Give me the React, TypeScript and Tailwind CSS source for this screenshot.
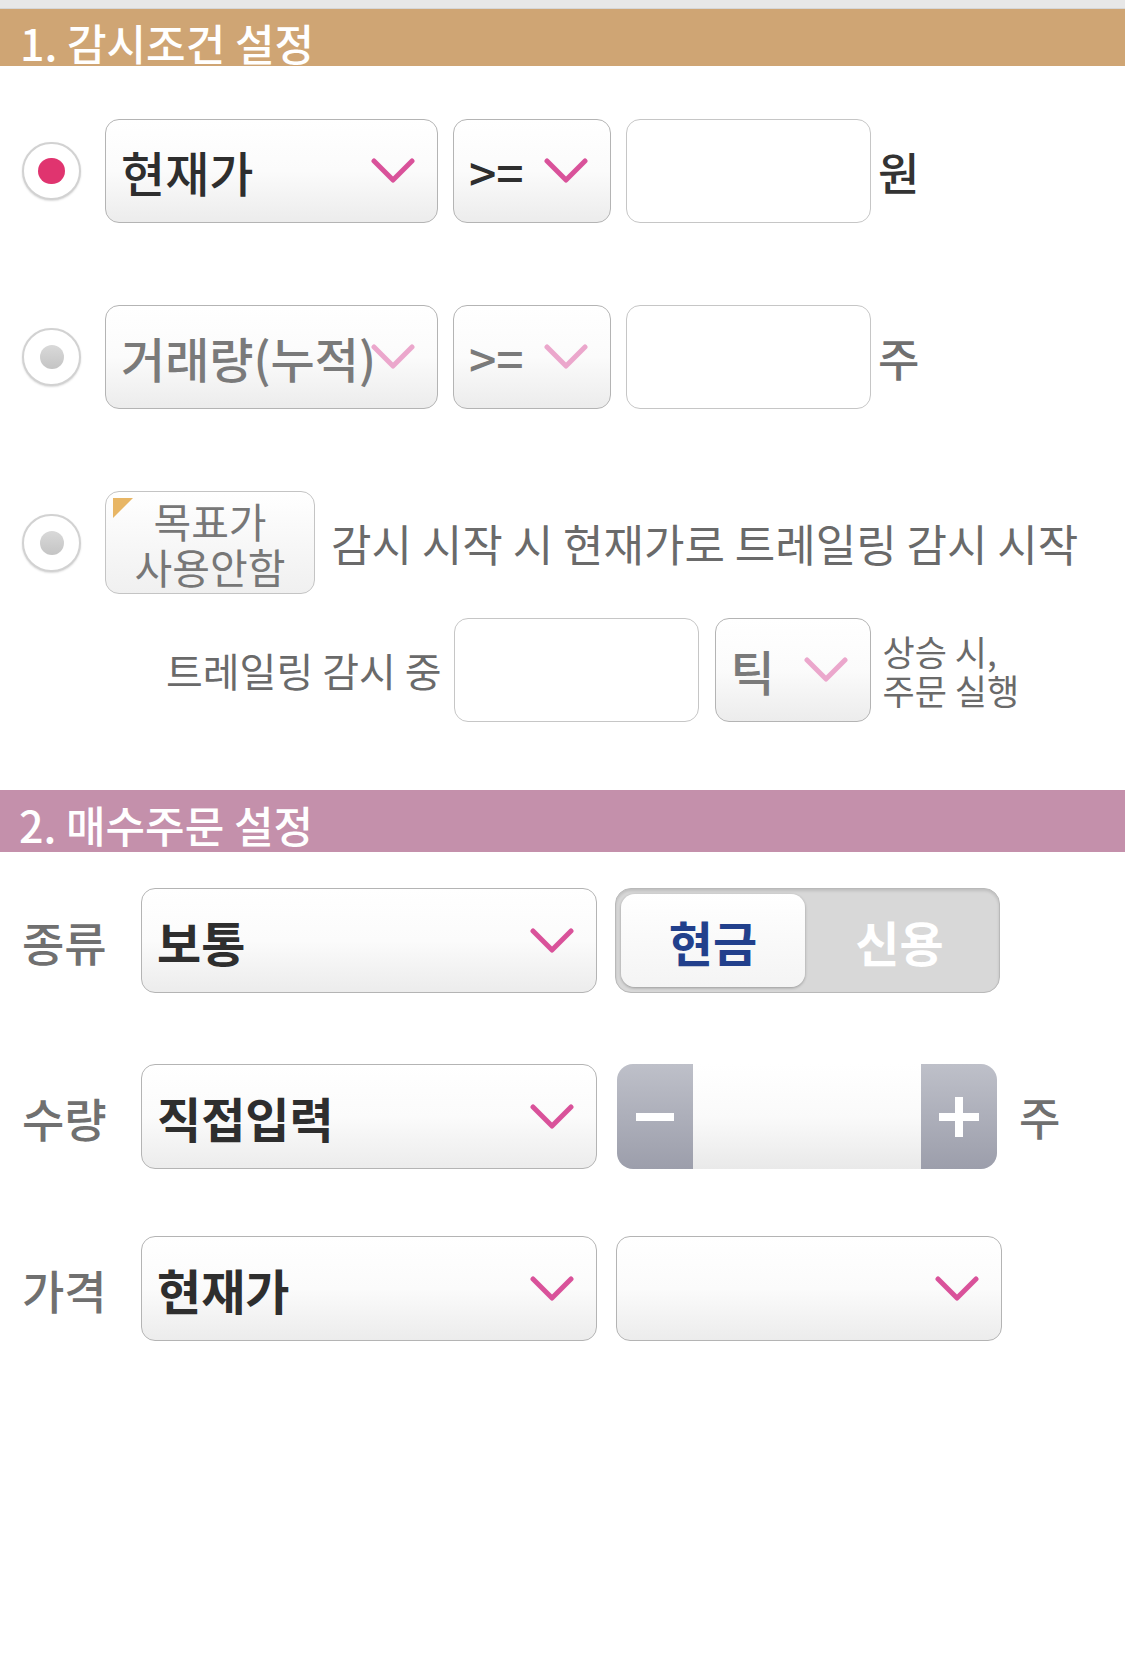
import React from 'react';

const Chevron: React.FC<{ light?: boolean }> = ({ light }) => (
  <svg width="44" height="26" viewBox="0 0 44 26" className="shrink-0">
    <polyline
      points="3,3 22,22 41,3"
      fill="none"
      stroke={light ? '#eba7cc' : '#d9529a'}
      strokeWidth="5"
      strokeLinecap="round"
      strokeLinejoin="round"
    />
  </svg>
);

const Radio: React.FC<{ checked?: boolean }> = ({ checked }) => (
  <div className="w-[59px] h-[58px] shrink-0 rounded-full border-2 border-[#d2d2d2] bg-white shadow-[0_1px_2px_rgba(0,0,0,0.15)] flex items-center justify-center">
    {checked ? (
      <div className="w-[27px] h-[26px] rounded-full bg-[#e0346f]" />
    ) : (
      <div className="w-[24px] h-[24px] rounded-full bg-gradient-to-b from-[#d9d9d9] to-[#c4c4c4]" />
    )}
  </div>
);

type DropProps = {
  text?: string;
  width: string;
  dim?: boolean;
  bold?: boolean;
};

const Dropdown: React.FC<DropProps> = ({ text, width, dim, bold }) => (
  <div
    className={`${width} relative h-full shrink-0 rounded-[14px] border-[1.5px] border-[#b4b4b4] bg-gradient-to-b from-white via-[#fbfbfb] to-[#ececec] flex items-center pl-[15px] overflow-hidden`}
  >
    <span
      className={`text-[48px] leading-none whitespace-nowrap ${
        dim ? 'text-[#7a7a7a]' : 'text-[#2e2e2e]'
      } ${bold ? 'font-bold' : 'font-medium'}`}
    >
      {text}
    </span>
    <div className="absolute right-[22px] top-1/2 -translate-y-1/2">
      <Chevron light={dim} />
    </div>
  </div>
);

const Input: React.FC<{ width: string }> = ({ width }) => (
  <div className={`${width} h-full shrink-0 rounded-[14px] border-[1.5px] border-[#c6c6c6] bg-white`} />
);

const App: React.FC = () => {
  return (
    <div className="w-[1125px] min-h-[1668px] bg-white font-['Noto_Sans_CJK_KR','Noto_Sans',sans-serif]">
      <div className="h-[9px] bg-[#e7e7e7] border-b border-[#d6d6d6]" />

      {/* 1. 감시조건 */}
      <div className="h-[57px] bg-[#cfa574] flex items-end pl-[20px] pb-[2px]">
        <span className="text-[43px] leading-none text-white font-medium">1. 감시조건 설정</span>
      </div>

      <div className="mt-[53px] h-[104px] flex items-center pl-[22px]">
        <Radio checked />
        <div className="ml-[24px] h-full flex items-center gap-[15px]">
          <Dropdown text="현재가" width="w-[333px]" />
          <Dropdown text=">=" width="w-[158px]" />
          <Input width="w-[245px]" />
        </div>
        <span className="ml-[7px] text-[45px] leading-none font-medium text-[#333]">원</span>
      </div>

      <div className="mt-[82px] h-[104px] flex items-center pl-[22px]">
        <Radio />
        <div className="ml-[24px] h-full flex items-center gap-[15px]">
          <Dropdown text="거래량(누적)" width="w-[333px]" dim />
          <Dropdown text=">=" width="w-[158px]" dim />
          <Input width="w-[245px]" />
        </div>
        <span className="ml-[7px] text-[45px] leading-none font-medium text-[#707070]">주</span>
      </div>

      <div className="mt-[82px] h-[103px] flex items-center pl-[22px]">
        <Radio />
        <div className="ml-[24px] relative w-[210px] h-full shrink-0 rounded-[14px] border-[1.5px] border-[#c4c4c4] bg-gradient-to-b from-white to-[#f0f0f0] flex flex-col items-center justify-center gap-[2px]">
          <div className="absolute left-[7px] top-[6px] w-0 h-0 border-t-[20px] border-t-[#e8b665] border-r-[20px] border-r-transparent" />
          <span className="text-[41px] leading-[44px] text-[#777]">목표가</span>
          <span className="text-[41px] leading-[44px] text-[#777]">사용안함</span>
        </div>
        <span className="ml-[16px] text-[44px] leading-none text-[#6a6a6a] whitespace-nowrap">
          감시 시작 시 현재가로 트레일링 감시 시작
        </span>
      </div>

      <div className="mt-[24px] h-[104px] flex items-center pl-[166px]">
        <span className="text-[40px] leading-none text-[#6a6a6a] whitespace-nowrap">트레일링 감시 중</span>
        <div className="ml-[12px] h-full flex items-center gap-[16px]">
          <Input width="w-[245px]" />
          <Dropdown text="틱" width="w-[156px]" dim />
        </div>
        <div className="ml-[12px] flex flex-col gap-[2px] text-[35px] leading-[37px] text-[#6a6a6a] whitespace-nowrap">
          <span>상승 시,</span>
          <span>주문 실행</span>
        </div>
      </div>

      {/* 2. 매수주문 */}
      <div className="mt-[68px] h-[62px] bg-[#c490ab] flex items-end pl-[19px] pb-[6px]">
        <span className="text-[43px] leading-none text-white font-medium">2. 매수주문 설정</span>
      </div>

      <div className="mt-[36px] h-[105px] flex items-center pl-[22px]">
        <span className="w-[88px] shrink-0 text-[46px] leading-none text-[#707070] font-medium whitespace-nowrap">종류</span>
        <div className="ml-[31px] h-full flex items-center gap-[18px]">
          <Dropdown text="보통" width="w-[456px]" bold />
          <div className="w-[385px] h-full shrink-0 rounded-[16px] border-[1.5px] border-[#b9b9b9] bg-[#d8d8d8] shadow-[inset_0_2px_3px_rgba(0,0,0,0.12)] flex items-center p-[5px]">
            <div className="w-[184px] h-full rounded-[14px] bg-gradient-to-b from-white to-[#f4f4f4] shadow-[0_1px_3px_rgba(0,0,0,0.3)] flex items-center justify-center">
              <span className="text-[48px] leading-none font-bold text-[#22408c]">현금</span>
            </div>
            <div className="flex-1 h-full flex items-center justify-center">
              <span className="text-[48px] leading-none font-bold text-white">신용</span>
            </div>
          </div>
        </div>
      </div>

      <div className="mt-[71px] h-[105px] flex items-center pl-[22px]">
        <span className="w-[88px] shrink-0 text-[46px] leading-none text-[#707070] font-medium whitespace-nowrap">수량</span>
        <div className="ml-[31px] h-full flex items-center gap-[20px]">
          <Dropdown text="직접입력" width="w-[456px]" bold />
          <div className="w-[380px] h-full shrink-0 rounded-[16px] overflow-hidden flex">
            <div className="w-[76px] h-full bg-gradient-to-b from-[#bec0c9] to-[#9c9eab] flex items-center justify-center">
              <div className="w-[38px] h-[8px] bg-white" />
            </div>
            <div className="flex-1 h-full bg-gradient-to-b from-white via-[#fafafa] to-[#e9e9e9]" />
            <div className="w-[76px] h-full bg-gradient-to-b from-[#bec0c9] to-[#9c9eab] flex items-center justify-center">
              <svg width="40" height="40" viewBox="0 0 40 40">
                <rect x="16" y="0" width="8" height="40" fill="#fff" />
                <rect x="0" y="16" width="40" height="8" fill="#fff" />
              </svg>
            </div>
          </div>
        </div>
        <span className="ml-[22px] text-[45px] leading-none font-medium text-[#707070]">주</span>
      </div>

      <div className="mt-[67px] h-[105px] flex items-center pl-[22px]">
        <span className="w-[88px] shrink-0 text-[46px] leading-none text-[#707070] font-medium whitespace-nowrap">가격</span>
        <div className="ml-[31px] h-full flex items-center gap-[19px]">
          <Dropdown text="현재가" width="w-[456px]" bold />
          <Dropdown text="" width="w-[386px]" />
        </div>
      </div>
    </div>
  );
};

export default App;
